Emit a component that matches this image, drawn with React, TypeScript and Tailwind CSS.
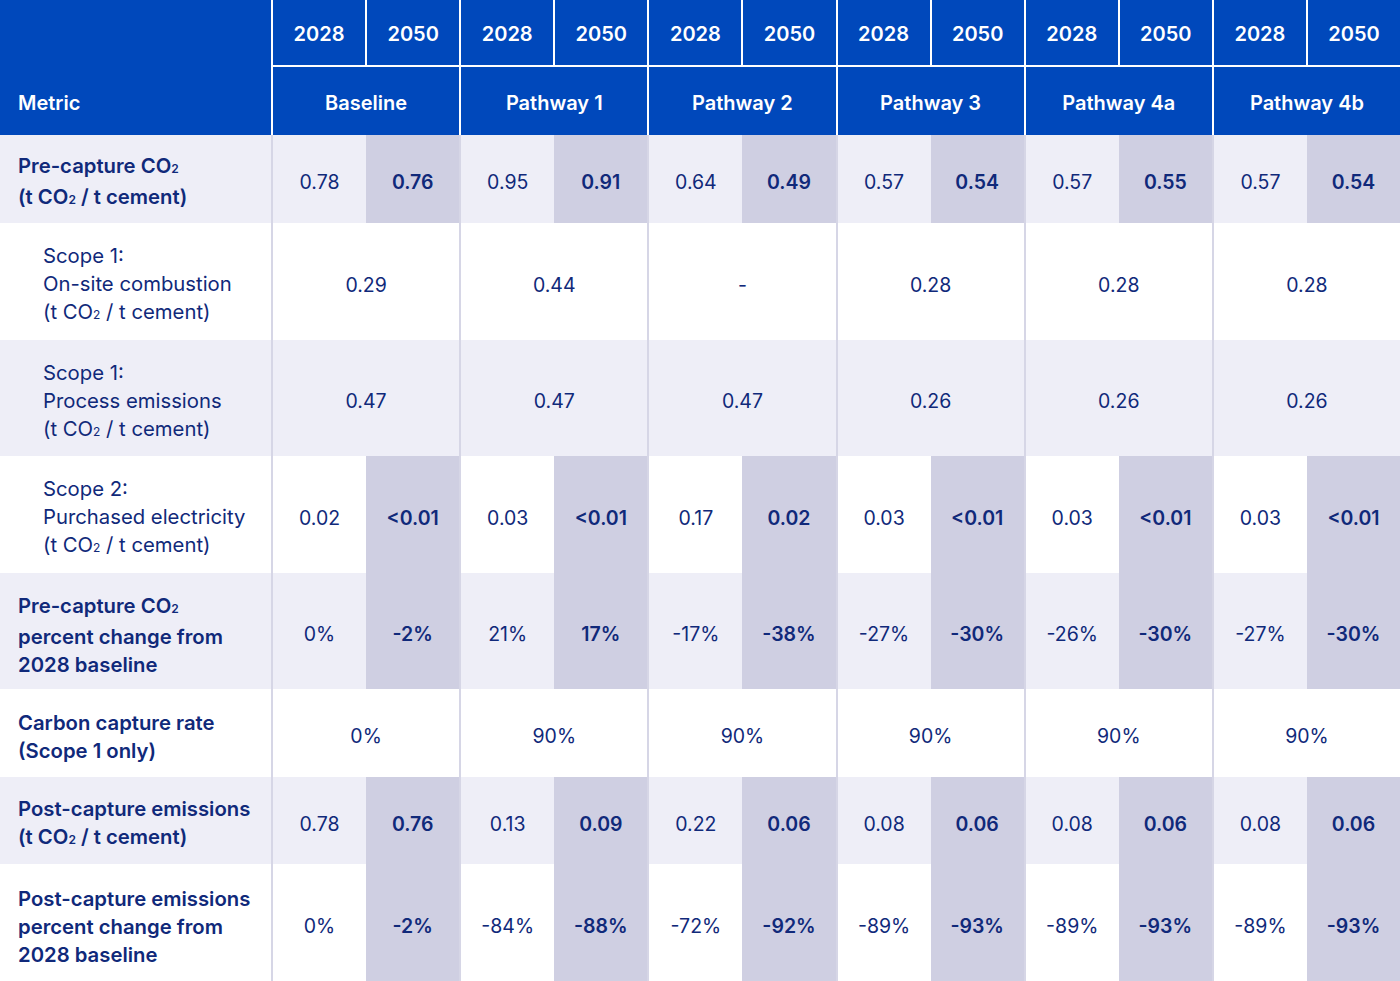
import React from "react";

const groups = ["Baseline", "Pathway 1", "Pathway 2", "Pathway 3", "Pathway 4a", "Pathway 4b"];

type Row = {
  label: string[];
  bold: boolean;
  indent: boolean;
  light: boolean;
  h: string;
  pairs?: [string, string][];
  merged?: string[];
};

const rows: Row[] = [
  {
    label: ["Pre-capture CO₂", "(t CO₂ / t cement)"],
    bold: true,
    indent: false,
    light: true,
    h: "h-[88px]",
    pairs: [["0.78", "0.76"], ["0.95", "0.91"], ["0.64", "0.49"], ["0.57", "0.54"], ["0.57", "0.55"], ["0.57", "0.54"]],
  },
  {
    label: ["Scope 1:", "On-site combustion", "(t CO₂ / t cement)"],
    bold: false,
    indent: true,
    light: false,
    h: "h-[117px]",
    merged: ["0.29", "0.44", "-", "0.28", "0.28", "0.28"],
  },
  {
    label: ["Scope 1:", "Process emissions", "(t CO₂ / t cement)"],
    bold: false,
    indent: true,
    light: true,
    h: "h-[116px]",
    merged: ["0.47", "0.47", "0.47", "0.26", "0.26", "0.26"],
  },
  {
    label: ["Scope 2:", "Purchased electricity", "(t CO₂ / t cement)"],
    bold: false,
    indent: true,
    light: false,
    h: "h-[117px]",
    pairs: [["0.02", "<0.01"], ["0.03", "<0.01"], ["0.17", "0.02"], ["0.03", "<0.01"], ["0.03", "<0.01"], ["0.03", "<0.01"]],
  },
  {
    label: ["Pre-capture CO₂", "percent change from", "2028 baseline"],
    bold: true,
    indent: false,
    light: true,
    h: "h-[116px]",
    pairs: [["0%", "-2%"], ["21%", "17%"], ["-17%", "-38%"], ["-27%", "-30%"], ["-26%", "-30%"], ["-27%", "-30%"]],
  },
  {
    label: ["Carbon capture rate", "(Scope 1 only)"],
    bold: true,
    indent: false,
    light: false,
    h: "h-[88px]",
    merged: ["0%", "90%", "90%", "90%", "90%", "90%"],
  },
  {
    label: ["Post-capture emissions", "(t CO₂ / t cement)"],
    bold: true,
    indent: false,
    light: true,
    h: "h-[87px]",
    pairs: [["0.78", "0.76"], ["0.13", "0.09"], ["0.22", "0.06"], ["0.08", "0.06"], ["0.08", "0.06"], ["0.08", "0.06"]],
  },
  {
    label: ["Post-capture emissions", "percent change from", "2028 baseline"],
    bold: true,
    indent: false,
    light: false,
    h: "h-[117px]",
    pairs: [["0%", "-2%"], ["-84%", "-88%"], ["-72%", "-92%"], ["-89%", "-93%"], ["-89%", "-93%"], ["-89%", "-93%"]],
  },
];

function Label({ text }: { text: string }) {
  const parts = text.split("₂");
  return (
    <>
      {parts.map((p, i) => (
        <React.Fragment key={i}>
          {p}
          {i < parts.length - 1 && <span className="text-[12px] align-baseline">2</span>}
        </React.Fragment>
      ))}
    </>
  );
}

export default function App() {
  return (
    <div
      className="w-[1400px] h-[981px] overflow-hidden bg-white text-[#10297a]"
      style={{ fontFamily: "Inter, 'Noto Sans', sans-serif" }}
    >
      {/* Header */}
      <div className="flex h-[135px] bg-[#0048bb] text-white font-semibold text-[20px]">
        <div className="w-[271px] shrink-0 flex items-end pl-[18px] pb-[17px]">Metric</div>
        {groups.map((g) => (
          <div key={g} className="flex-1 flex flex-col border-l-2 border-white">
            <div className="h-[67px] flex border-b-2 border-white">
              <div className="flex-1 flex items-center justify-center pt-[3px]">2028</div>
              <div className="flex-1 flex items-center justify-center pt-[3px] border-l-2 border-white">2050</div>
            </div>
            <div className="flex-1 flex items-center justify-center pt-[4px]">{g}</div>
          </div>
        ))}
      </div>
      {/* Body */}
      {rows.map((r, ri) => (
        <div key={ri} className={`flex ${r.h} ${r.light ? "bg-[#eeeef7]" : "bg-white"}`}>
          <div
            className={`w-[271px] shrink-0 flex flex-col justify-center pt-[8px] text-[20.3px] leading-[28px] ${
              r.bold ? "font-semibold pl-[18px]" : "font-normal pl-[43px]"
            }`}
          >
            {r.label.map((l, li) => (
              <div key={li} className="whitespace-nowrap">
                <Label text={l} />
              </div>
            ))}
          </div>
          {groups.map((g, gi) => (
            <div key={g} className="flex-1 flex border-l-2 border-[#d6d6e6] text-[19.5px]">
              {r.pairs ? (
                <>
                  <div className="flex-1 flex items-center justify-center pt-[8px] font-normal">
                    {r.pairs[gi][0]}
                  </div>
                  <div className="flex-1 flex items-center justify-center pt-[8px] font-semibold bg-[#cfcfe2]">
                    {r.pairs[gi][1]}
                  </div>
                </>
              ) : (
                <div className="flex-1 flex items-center justify-center pt-[8px] font-normal">{r.merged![gi]}</div>
              )}
            </div>
          ))}
        </div>
      ))}
    </div>
  );
}
